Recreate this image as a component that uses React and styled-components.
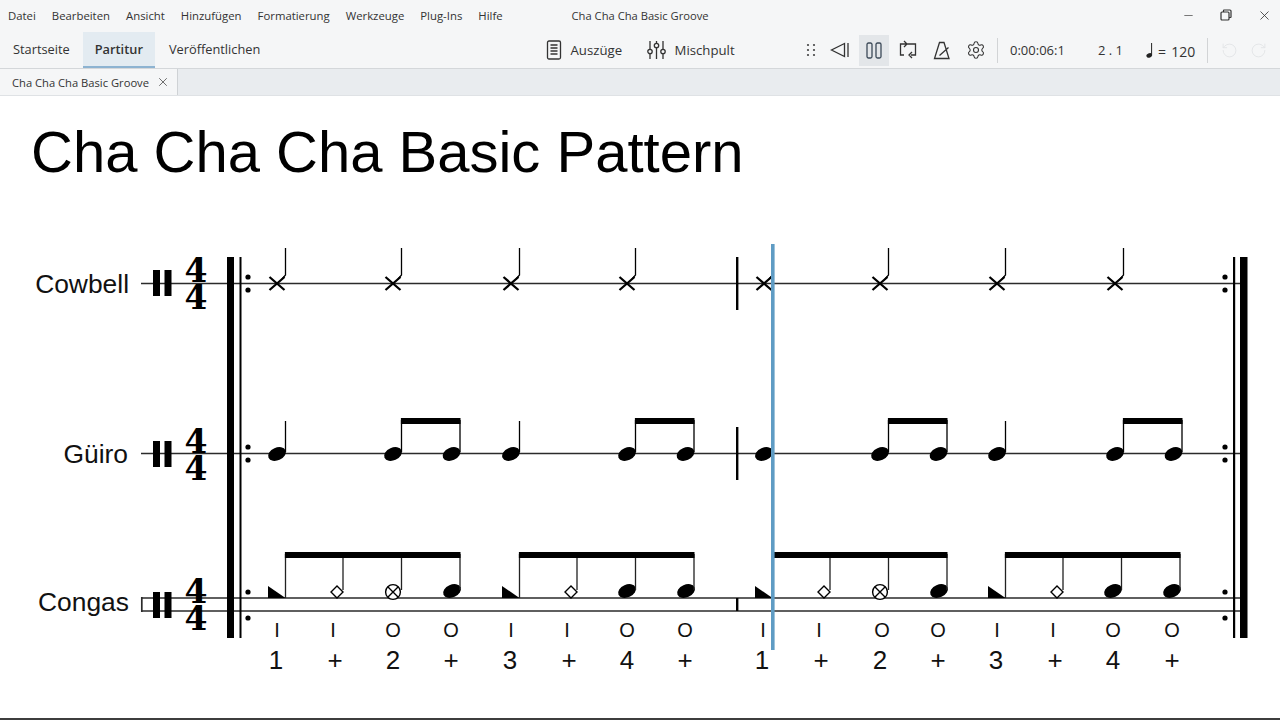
import React from 'react'
import styled, { createGlobalStyle } from 'styled-components'
import { Settings, RotateCcw, RotateCw, X, Minus } from 'lucide-react'

const GlobalStyle = createGlobalStyle`
    html, body {
        margin: 0;
        padding: 0;
        height: 100%;
        overflow: hidden;
        background: #f5f6f7;
    }
    #root {
        height: 100%;
    }
`

const menus = ['Datei', 'Bearbeiten', 'Ansicht', 'Hinzufügen', 'Formatierung', 'Werkzeuge', 'Plug-Ins', 'Hilfe']
const pages = ['Startseite', 'Partitur', 'Veröffentlichen']

const STEM = 8.5
const cowbell = [277, 393, 511, 627, 764, 880, 997, 1115]
const guiroSingles = [277, 511, 764, 997]
const guiroPairs = [393, 627, 880, 1115]
// the muted third stroke only shows up in the first group of each bar
const congaGroups = [
    { x: 277, muted: true },
    { x: 511, muted: false },
    { x: 764, muted: true },
    { x: 997, muted: false }
]
const strokes = [
    [277, 'I'], [333, 'I'], [393, 'O'], [451, 'O'], [511, 'I'], [567, 'I'], [627, 'O'], [685, 'O'],
    [763, 'I'], [819, 'I'], [882, 'O'], [938, 'O'], [997, 'I'], [1053, 'I'], [1113, 'O'], [1172, 'O']
]
const counts = [
    [276, '1'], [335, '+'], [393, '2'], [451, '+'], [510, '3'], [569, '+'], [627, '4'], [685, '+'],
    [762, '1'], [821, '+'], [880, '2'], [938, '+'], [996, '3'], [1055, '+'], [1113, '4'], [1172, '+']
]

const Head = ({ x, y }) => (
    <ellipse cx={x} cy={y} rx="9.3" ry="6.3" fill="#000" transform={`rotate(-24 ${x} ${y})`} />
)

const StaffStart = ({ y, top }) => (
    <g>
        <rect x="153" y={y - 13} width="7" height="26" />
        <rect x="164.5" y={y - 13} width="7" height="26" />
        <Meter>
            <tspan x="196" y={top + 25}>4</tspan>
            <tspan x="196" y={top + 52}>4</tspan>
        </Meter>
    </g>
)

const RepeatDots = ({ x, y1, y2 }) => (
    <g>
        <circle cx={x} cy={y1} r="2.6" />
        <circle cx={x} cy={y2} r="2.6" />
    </g>
)

const App = () => {
    return (
        <Page>
            <GlobalStyle />
            <TitleBar>
                <MenuList>
                    {menus.map((item) => (
                        <MenuItem key={item}>{item}</MenuItem>
                    ))}
                </MenuList>
                <WindowTitle>Cha Cha Cha Basic Groove</WindowTitle>
                <WindowControls>
                    <Minus size={13} strokeWidth={1.2} />
                    <svg width="12" height="12" viewBox="0 0 12 12" fill="none" stroke="#333" strokeWidth="1.2">
                        <rect x="1" y="3" width="8" height="8" rx="1" />
                        <path d="M3.5 3V1.5A.5.5 0 0 1 4 1h6a1 1 0 0 1 1 1v6a.5.5 0 0 1-.5.5H9" />
                    </svg>
                    <X size={15} strokeWidth={1.3} />
                </WindowControls>
            </TitleBar>
            <Ribbon>
                <PageTabs>
                    {pages.map((item) => (
                        <PageTab key={item} $active={item === 'Partitur'}>{item}</PageTab>
                    ))}
                </PageTabs>
                <CenterTools>
                    <ToolLabel>
                        <svg width="16" height="20" viewBox="0 0 16 20" fill="none" stroke="#333" strokeWidth="1.3">
                            <rect x="1.5" y="1" width="13" height="18" rx="1.5" />
                            <path d="M4.5 5h7M4.5 8h7M4.5 11h7M4.5 14h7" />
                        </svg>
                        Auszüge
                    </ToolLabel>
                    <ToolLabel>
                        <svg width="19" height="20" viewBox="0 0 19 20" fill="none" stroke="#333" strokeWidth="1.3">
                            <path d="M3 1v8M3 14v5M9.5 1v2M9.5 8v11M16 1v8M16 14v5" />
                            <circle cx="3" cy="11.5" r="2.2" />
                            <circle cx="9.5" cy="5.5" r="2.2" />
                            <circle cx="16" cy="11.5" r="2.2" />
                        </svg>
                        Mischpult
                    </ToolLabel>
                </CenterTools>
                <PlayTools>
                    <IconButton $width="24px">
                        <svg width="12" height="16" viewBox="0 0 12 16" fill="#444">
                            <circle cx="3" cy="3" r="1.1" /><circle cx="9" cy="3" r="1.1" />
                            <circle cx="3" cy="8" r="1.1" /><circle cx="9" cy="8" r="1.1" />
                            <circle cx="3" cy="13" r="1.1" /><circle cx="9" cy="13" r="1.1" />
                        </svg>
                    </IconButton>
                    <IconButton>
                        <svg width="20" height="16" viewBox="0 0 20 16" fill="none" stroke="#333" strokeWidth="1.3">
                            <path d="M14.5 1.5 1.5 8l13 6.5zM18 1v14" />
                        </svg>
                    </IconButton>
                    <IconButton $active>
                        <svg width="16" height="17" viewBox="0 0 16 17" fill="none" stroke="#3c4a58" strokeWidth="1.3">
                            <rect x="1" y="1" width="5" height="15" rx="1.5" />
                            <rect x="10" y="1" width="5" height="15" rx="1.5" />
                        </svg>
                    </IconButton>
                    <IconButton>
                        <svg width="18" height="20" viewBox="0 0 18 20" fill="none" stroke="#333" strokeWidth="1.3">
                            <path d="M5 4h11.5v11H12M13 18l-3-3 3-3M12 4H1.5v11H5M5 1l3 3-3 3" />
                        </svg>
                    </IconButton>
                    <IconButton>
                        <svg width="18" height="19" viewBox="0 0 18 19" fill="none" stroke="#333" strokeWidth="1.3">
                            <path d="M6.5 1.5h4.5L16 17.5H1.5zM6.5 14.5L15.5 6.5" />
                        </svg>
                    </IconButton>
                    <IconButton>
                        <Settings size={20} strokeWidth={1.3} color="#333" />
                    </IconButton>
                    <Divider />
                    <Readout $width="88px">0:00:06:1</Readout>
                    <Readout $width="48px">2 . 1</Readout>
                    <Tempo>
                        <svg width="9" height="15" viewBox="0 0 9 15">
                            <path d="M5.6 0v12.5" stroke="#222" strokeWidth="1" />
                            <ellipse cx="3.2" cy="12.4" rx="2.9" ry="2.2" fill="#222" transform="rotate(-24 3.2 12.4)" />
                        </svg>
                        <TempoValue>= 120</TempoValue>
                    </Tempo>
                    <Divider />
                    <History>
                        <RotateCcw size={17} strokeWidth={1.4} />
                        <RotateCw size={17} strokeWidth={1.4} />
                    </History>
                </PlayTools>
            </Ribbon>
            <TabBar>
                <ScoreTab>
                    Cha Cha Cha Basic Groove
                    <X size={14} strokeWidth={1.2} color="#333" />
                </ScoreTab>
            </TabBar>
            <Sheet>
                <ScoreTitle>Cha Cha Cha Basic Pattern</ScoreTitle>
                <Notation viewBox="0 230 1280 488" width="1280" height="488">
                    <InstrumentName x="129" y="293">Cowbell</InstrumentName>
                    <InstrumentName x="128" y="463">Güiro</InstrumentName>
                    <InstrumentName x="129" y="611">Congas</InstrumentName>

                    <g stroke="#2b2b2b" strokeWidth="1.7">
                        <path d="M141 283.5H1240M141 453.5H1240M141 598H1240M141 611H1240" fill="none" />
                        <path d="M141.8 597v15" />
                    </g>

                    <StaffStart y={283} top={257} />
                    <StaffStart y={454} top={428} />
                    <StaffStart y={605} top={578} />

                    <rect x="227" y="257" width="7" height="381" />
                    <rect x="239.5" y="257" width="2" height="381" />
                    <rect x="1233" y="257" width="2.2" height="381" />
                    <rect x="1240" y="257" width="7.5" height="381" />

                    {[248, 1225].map((x) => (
                        <g key={x}>
                            <RepeatDots x={x} y1={277} y2={290} />
                            <RepeatDots x={x} y1={447} y2={460} />
                            <RepeatDots x={x} y1={592} y2={618} />
                        </g>
                    ))}

                    <rect x="736" y="257" width="2.4" height="53" />
                    <rect x="736" y="427" width="2.4" height="53" />
                    <rect x="736" y="598" width="2.4" height="13" />

                    {cowbell.map((x) => (
                        <g key={x} stroke="#000" fill="none">
                            <path d={`M${x - 7.5} ${277}L${x + 7.5} ${290}M${x + 7.5} ${277}L${x - 7.5} ${290}`} strokeWidth="2.3" />
                            <path d={`M${x + STEM} 248V275L${x + 5} 279`} strokeWidth="1.3" />
                        </g>
                    ))}

                    {guiroSingles.map((x) => (
                        <g key={x}>
                            <Head x={x} y={454} />
                            <path d={`M${x + STEM} 421V452`} stroke="#000" strokeWidth="1.3" />
                        </g>
                    ))}
                    {guiroPairs.map((x) => (
                        <g key={x}>
                            <Head x={x} y={454} />
                            <Head x={x + 58.5} y={454} />
                            <path d={`M${x + STEM} 420V452M${x + 58.5 + STEM} 420V452`} stroke="#000" strokeWidth="1.3" />
                            <rect x={x + STEM - 0.6} y="418" width="59.6" height="6" />
                        </g>
                    ))}

                    {congaGroups.map(({ x, muted }) => (
                        <g key={x}>
                            <path d={`M${x - 9} 586L${x + STEM} 598H${x - 9}Z`} />
                            <path d={`M${x + 60} 586l6 6 -6 6 -6 -6z`} fill="#fff" stroke="#000" strokeWidth="1.4" />
                            {muted ? (
                                <g>
                                    <circle cx={x + 116} cy="592" r="7.4" fill="#fff" stroke="#000" strokeWidth="1.4" />
                                    <path d={`M${x + 111} 587l10 10M${x + 121} 587l-10 10`} stroke="#000" strokeWidth="1.4" />
                                </g>
                            ) : (
                                <Head x={x + 116} y={591} />
                            )}
                            <Head x={x + 175} y={591} />
                            <path
                                d={`M${x + STEM} 554V598M${x + 66} 554V590M${x + 124.5} 554V590M${x + 183} 554V590`}
                                stroke="#222"
                                strokeWidth="1.3"
                            />
                            <rect x={x + STEM - 0.6} y="552" width="175.6" height="6" />
                        </g>
                    ))}

                    {strokes.map(([x, s], i) => (
                        <Stroke key={i} x={x} y="637">{s}</Stroke>
                    ))}
                    {counts.map(([x, s], i) => (
                        <Count key={i} x={x} y="669">{s}</Count>
                    ))}

                    <rect x="771" y="244" width="3.6" height="406" fill="#5f9cc4" />
                </Notation>
            </Sheet>
        </Page>
    )
}

export default App

const Page = styled.div`
    display: flex;
    flex-direction: column;
    height: 720px;
    width: 1280px;
    font-family: "Open Sans", "Noto Sans", sans-serif;
    color: #2a2a2a;
`

const TitleBar = styled.div`
    display: flex;
    align-items: center;
    box-sizing: border-box;
    height: 32px;
    padding: 0 0 2px 8px;
`

const MenuList = styled.div`
    display: flex;
    gap: 16px;
    font-size: 11.35px;
`

const MenuItem = styled.span`
    color: #333;
`

const WindowTitle = styled.span`
    margin-left: 69px;
    font-size: 11.2px;
    color: #333;
`

const WindowControls = styled.div`
    display: flex;
    align-items: center;
    gap: 25px;
    margin-left: auto;
    padding-right: 8px;
    color: #333;
`

const Ribbon = styled.div`
    display: flex;
    align-items: center;
    height: 36px;
    border-bottom: 1px solid #d4d7da;
`

const PageTabs = styled.div`
    display: flex;
    width: 546px;
    height: 100%;
`

const PageTab = styled.div`
    display: flex;
    align-items: center;
    box-sizing: border-box;
    padding: 0 ${(props) => (props.$active ? '12px' : '13px')};
    font-size: 12.8px;
    font-weight: ${(props) => (props.$active ? 600 : 400)};
    background: ${(props) => (props.$active ? '#e3ebf1' : 'transparent')};
    border-bottom: 2px solid ${(props) => (props.$active ? '#8db3d1' : 'transparent')};
    color: #333;

    &:last-child {
        padding-left: 14px;
    }
`

const CenterTools = styled.div`
    display: flex;
    align-items: center;
    gap: 25px;
    width: 253px;
`

const ToolLabel = styled.div`
    display: flex;
    align-items: center;
    gap: 8.5px;
    font-size: 13.2px;
    color: #333;
`

const PlayTools = styled.div`
    display: flex;
    align-items: center;
    height: 100%;
`

const IconButton = styled.div`
    display: flex;
    align-items: center;
    justify-content: center;
    box-sizing: border-box;
    width: ${(props) => props.$width || (props.$active ? '30px' : '34px')};
    margin: ${(props) => (props.$active ? '0 2px' : '0')};
    height: 31px;
    background: ${(props) => (props.$active ? '#e3e6e9' : 'transparent')};
`

const Divider = styled.div`
    width: 1px;
    height: 25px;
    margin: 0 12px 0 4px;
    background: #d2d4d6;
`

const Readout = styled.div`
    width: ${(props) => props.$width};
    font-size: 13px;
    color: #333;
`

const Tempo = styled.div`
    display: flex;
    align-items: center;
    gap: 3px;
    width: 57px;
    color: #333;
`

const TempoValue = styled.span`
    position: relative;
    top: 1px;
    font-size: 14px;
    word-spacing: 1.5px;
    white-space: nowrap;
`

const History = styled.div`
    display: flex;
    gap: 12px;
    margin-left: 1px;
    color: #e4e6e8;
`

const TabBar = styled.div`
    display: flex;
    height: 26px;
    background: #e9ecef;
    border-bottom: 1px solid #dfe2e5;
`

const ScoreTab = styled.div`
    display: flex;
    align-items: center;
    gap: 7px;
    box-sizing: border-box;
    width: 178px;
    padding-left: 12px;
    background: #f5f6f7;
    border-right: 1px solid #cfd2d5;
    font-size: 11.2px;
    white-space: nowrap;
    color: #333;
`

const Sheet = styled.div`
    flex: 1;
    background: #fff;
    border-bottom: 2px solid #3d3d3d;
`

const ScoreTitle = styled.h1`
    box-sizing: border-box;
    height: 134px;
    margin: 0;
    padding: 23px 0 0 31px;
    font-family: "Liberation Sans", Arial, sans-serif;
    font-size: 58px;
    font-weight: 400;
    line-height: 66px;
    color: #000;
`

const Notation = styled.svg`
    display: block;
`

const InstrumentName = styled.text`
    font-family: "Liberation Sans", Arial, sans-serif;
    font-size: 26.4px;
    text-anchor: end;
    fill: #111;
`

const Meter = styled.text`
    font-family: "DejaVu Serif", serif;
    font-size: 33px;
    font-weight: 700;
    text-anchor: middle;
    fill: #000;
`

const Stroke = styled.text`
    font-family: "Liberation Sans", Arial, sans-serif;
    font-size: 20px;
    text-anchor: middle;
    fill: #111;
`

const Count = styled.text`
    font-family: "Liberation Sans", Arial, sans-serif;
    font-size: 26px;
    text-anchor: middle;
    fill: #111;
`
